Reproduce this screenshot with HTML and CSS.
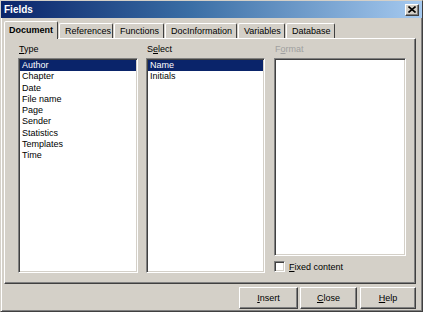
FILE: index.html
```html
<!DOCTYPE html>
<html lang="en">
<head>
<meta charset="UTF-8">
<title>Fields</title>
<link rel="stylesheet" href="styles.css">
</head>
<body>
<div class="window">
  <div class="titlebar">
    <span class="title">Fields</span>
    <span class="close">
      <svg width="8" height="7" viewBox="0 0 8 7"><path d="M0.5 0.5 L7.5 6.5 M7.5 0.5 L0.5 6.5" stroke="#000" stroke-width="1.6" fill="none"/></svg>
    </span>
  </div>

  <div class="tabs">
    <div class="tab active">Document</div>
    <div class="tab">References</div>
    <div class="tab">Functions</div>
    <div class="tab">DocInformation</div>
    <div class="tab">Variables</div>
    <div class="tab">Database</div>
  </div>

  <div class="panel">
    <div class="col col-type">
      <div class="label"><u>T</u>ype</div>
      <ul class="list">
        <li class="selected">Author</li>
        <li>Chapter</li>
        <li>Date</li>
        <li>File name</li>
        <li>Page</li>
        <li>Sender</li>
        <li>Statistics</li>
        <li>Templates</li>
        <li>Time</li>
      </ul>
    </div>
    <div class="col col-select">
      <div class="label">S<u>e</u>lect</div>
      <ul class="list">
        <li class="selected">Name</li>
        <li>Initials</li>
      </ul>
    </div>
    <div class="col col-format">
      <div class="label disabled">F<u>o</u>rmat</div>
      <div class="list format-box"></div>
      <label class="check"><span class="box"></span><span><u>F</u>ixed content</span></label>
    </div>
  </div>

  <div class="buttons">
    <button class="btn btn-insert"><u>I</u>nsert</button>
    <button class="btn btn-close"><u>C</u>lose</button>
    <button class="btn btn-help"><u>H</u>elp</button>
  </div>
</div>
</body>
</html>
```

FILE: styles.css
```css
body {
  margin: 0;
  background: #d4d0c8;
  font-family: 'Liberation Sans', Arial, sans-serif;
  font-size: 9px;
  color: #000;
}
u {
  text-decoration: underline;
}
.window {
  width: 423px;
  height: 312px;
  box-sizing: border-box;
  border: 1px solid;
  border-color: #d4d0c8 #404040 #404040 #d4d0c8;
  box-shadow: inset 1px 1px 0 #fff, inset -1px -1px 0 #808080;
  padding: 1px 1px 0;
  display: flex;
  flex-direction: column;
  background: #d4d0c8;
}
.titlebar {
  height: 17px;
  margin: -1px -1px 0;
  background: linear-gradient(90deg, #0a246a 0%, #3a6ea5 45%, #a6caf0 100%);
  display: flex;
  align-items: center;
  justify-content: space-between;
  padding: 0 3px 0 3px;
}
.title {
  color: #fff;
  font-weight: bold;
  font-size: 10px;
}
.close {
  width: 14px;
  height: 12px;
  box-sizing: border-box;
  background: #d4d0c8;
  border: 1px solid;
  border-color: #fff #404040 #404040 #fff;
  box-shadow: inset -1px -1px 0 #808080;
  display: flex;
  align-items: center;
  justify-content: center;
}

/* tabs */
.tabs {
  display: flex;
  align-items: flex-end;
  margin: 3px 0 0 2px;
  height: 17px;
  position: relative;
  z-index: 1;
}
.tab {
  height: 15px;
  box-sizing: border-box;
  padding: 2px 5px 0;
  border: 1px solid;
  border-bottom: none;
  border-color: #fff #404040 transparent #fff;
  border-radius: 2px 2px 0 0;
  white-space: nowrap;
  margin-right: 1px;
}
.tab.active {
  height: 18px;
  margin-bottom: -1px;
  font-weight: bold;
  background: #d4d0c8;
  padding: 3px 4px 0 4px;
}
.tab:nth-child(2) { width: 54px; }
.tab:nth-child(3) { width: 50px; }
.tab:nth-child(4) { width: 72px; text-align: center; }
.tab:nth-child(5) { width: 47px; }
.tab:nth-child(6) { width: 49px; }

/* panel */
.panel {
  margin: 0 5px 0 2px;
  height: 246px;
  box-sizing: border-box;
  border: 1px solid;
  border-color: #fff #404040 #404040 #fff;
  box-shadow: inset -1px -1px 0 #808080;
  display: flex;
  padding: 5px 0 0 13px;
}
.col {
  display: flex;
  flex-direction: column;
}
.col-type { width: 120px; }
.col-select { width: 119px; margin-left: 8px; }
.col-format { width: 132px; margin-left: 9px; }
.label {
  height: 14px;
  padding-left: 1px;
}
.label.disabled {
  color: #a0a0a0;
}
.list {
  list-style: none;
  margin: 0;
  padding: 1px;
  background: #fff;
  height: 215px;
  box-sizing: border-box;
  border: 1px solid;
  border-color: #808080 #fff #fff #808080;
  box-shadow: inset 1px 1px 0 #404040, inset -1px -1px 0 #d4d0c8;
}
.list li {
  height: 11.25px;
  line-height: 11px;
  padding-left: 2px;
}
.list li.selected {
  background: #0a246a;
  color: #fff;
}
.format-box {
  height: 198px;
}
.check {
  display: flex;
  align-items: center;
  gap: 4px;
  margin-top: 5px;
}
.box {
  width: 11px;
  height: 11px;
  box-sizing: border-box;
  background: #fff;
  border: 1px solid;
  border-color: #808080 #fff #fff #808080;
  box-shadow: inset 1px 1px 0 #404040, inset -1px -1px 0 #d4d0c8;
}

/* bottom buttons */
.buttons {
  display: flex;
  justify-content: flex-end;
  margin: 3px 5px 0 0;
}
.btn {
  font: inherit;
  height: 22px;
  box-sizing: border-box;
  background: #d4d0c8;
  border: 1px solid;
  border-color: #fff #404040 #404040 #fff;
  box-shadow: inset -1px -1px 0 #808080;
  padding: 0;
}
.btn-insert { width: 59px; }
.btn-close { width: 57px; margin-left: 2px; }
.btn-help { width: 56px; margin-left: 3px; }
```
